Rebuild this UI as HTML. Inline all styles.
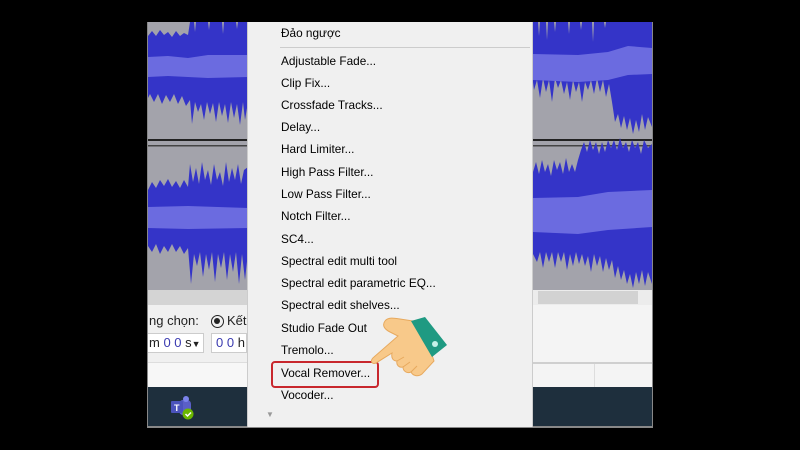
<!DOCTYPE html>
<html><head><meta charset="utf-8"><style>
*{margin:0;padding:0;box-sizing:border-box}
body{width:800px;height:450px;background:#000;position:relative;overflow:hidden;font-family:"Segoe UI","Liberation Sans","Noto Sans CJK SC",sans-serif}
.abs{position:absolute}
.menu{left:247px;top:22px;width:286px;height:405px;background:#f0f0f0;border-left:1px solid #ccc;border-right:1px solid #ccc}
.it{position:absolute;left:33px;font-size:11.8px;color:#000;white-space:nowrap}
</style></head><body>
<div class="abs" style="left:147px;top:22px;width:506px;height:406px;background:#888"></div>
<svg class="abs" style="left:148px;top:22px" width="504" height="268" viewBox="0 0 504 268">
<rect width="504" height="268" fill="#a3a3ab"/>
<!-- track 1 -->
<path d="M0 14 L4 9 L8 14 L12 8 L16 13 L20 10 L24 15 L28 9 L32 14 L36 11 L40 13 L42 0 L100 0 L100 80 L97 98 L95 80 L92 103 L89 82 L86 96 L83 80 L80 101 L77 82 L74 94 L71 80 L68 100 L65 81 L62 92 L59 80 L56 98 L53 82 L50 90 L47 80 L44 102 L42 78 L38 84 L34 74 L30 82 L26 72 L22 80 L18 73 L14 82 L10 72 L6 80 L2 72 L0 76 Z" fill="#3434c8"/>
<path d="M46 0 L47 10 L48 0 M60 0 L61 8 L62 0 M74 0 L75 12 L76 0 M88 0 L89 7 L90 0" fill="#a3a3ab"/>
<path d="M0 35 L20 34 L40 36 L60 33 L100 33 L100 55 L60 56 L40 55 L20 54 L0 55 Z" fill="#6b6be0"/>
<path d="M385 0 L504 0 L504 105 L500 95 L497 108 L494 92 L491 110 L488 98 L485 112 L482 96 L479 108 L476 94 L473 106 L470 92 L467 100 L464 80 L461 62 L458 75 L455 58 L452 70 L449 56 L446 72 L443 58 L440 68 L437 60 L434 80 L431 60 L428 70 L425 58 L422 78 L419 60 L416 72 L413 58 L410 66 L407 56 L404 80 L401 58 L398 70 L395 56 L392 76 L389 58 L386 68 L385 60 Z" fill="#3434c8"/>
<path d="M390 0 L391 14 L392 0 M398 0 L399 18 L400 0 M406 0 L407 10 L408 0 M420 0 L421 12 L422 0 M432 0 L433 8 L434 0 M444 0 L445 20 L446 0 M456 0 L457 6 L458 0" fill="#a3a3ab"/>
<path d="M385 32 L430 33 L460 30 L480 24 L504 26 L504 52 L480 53 L460 58 L430 60 L385 58 Z" fill="#6b6be0"/>
<rect x="0" y="117" width="504" height="2" fill="#222"/>
<rect x="0" y="123" width="504" height="1.5" fill="#444"/>
<!-- track 2 -->
<path d="M0 168 L4 160 L8 166 L12 158 L16 164 L20 157 L24 165 L28 159 L32 166 L36 158 L40 165 L42 142 L45 160 L48 146 L51 162 L54 140 L57 158 L60 148 L63 163 L66 142 L69 158 L72 150 L75 164 L78 140 L81 160 L84 146 L87 158 L90 142 L93 162 L96 148 L100 145 L100 230 L97 258 L94 232 L91 262 L88 230 L85 250 L82 232 L79 258 L76 230 L73 246 L70 232 L67 260 L64 230 L61 248 L58 232 L55 255 L52 230 L49 244 L46 232 L43 262 L40 226 L36 232 L32 224 L28 230 L24 222 L20 230 L16 224 L12 232 L8 222 L4 230 L0 224 Z" fill="#3434c8"/>
<path d="M385 150 L388 140 L391 152 L394 138 L397 150 L400 142 L403 154 L406 138 L409 148 L412 140 L415 152 L418 136 L421 150 L424 142 L427 150 L430 138 L433 128 L436 120 L439 130 L442 118 L445 128 L448 120 L451 132 L454 120 L457 130 L460 118 L463 126 L466 118 L469 128 L472 116 L475 126 L478 120 L481 130 L484 118 L487 126 L490 120 L493 132 L496 118 L500 126 L504 122 L504 262 L500 250 L497 264 L494 248 L491 262 L488 250 L485 266 L482 252 L479 262 L476 248 L473 258 L470 244 L467 256 L464 238 L461 248 L458 236 L455 250 L452 234 L449 244 L446 232 L443 250 L440 234 L437 244 L434 232 L431 242 L428 230 L425 244 L422 232 L419 248 L416 230 L413 240 L410 230 L407 246 L404 230 L401 240 L398 230 L395 246 L392 230 L389 240 L385 232 Z" fill="#3434c8"/>
<path d="M0 185 L40 184 L100 186 L100 206 L40 207 L0 206 Z" fill="#6b6be0"/>
<path d="M385 176 L430 175 L460 170 L504 168 L504 205 L460 208 L430 212 L385 210 Z" fill="#6b6be0"/>
</svg>
<!-- bottom left panel -->
<div class="abs" style="left:148px;top:290px;width:99px;height:15px;background:#d4d4d4"></div>
<div class="abs" style="left:148px;top:305px;width:99px;height:57px;background:#f0f0f0"></div>
<div class="abs" style="left:148px;top:362px;width:99px;height:25px;background:#f7f7f7;border-top:1px solid #ddd"></div>
<div class="abs" style="left:148px;top:387px;width:504px;height:39px;background:#1e2f3d"></div>
<div class="abs" style="left:149px;top:313px;font-size:13px;color:#222">ng chọn:</div>
<div class="abs" style="left:211px;top:315px;width:13px;height:13px;border:1.5px solid #222;border-radius:50%"><div style="margin:2px;width:6px;height:6px;border-radius:50%;background:#222"></div></div>
<div class="abs" style="left:227px;top:313px;font-size:13px;color:#222">Kết</div>
<div class="abs" style="left:148px;top:333px;width:56px;height:20px;background:#fff;border:1px solid #ccc;border-left:none;font-size:13px;color:#222;padding-left:1px;line-height:18px">m <span style="color:#3a3ab0">0 0</span> s<span style="font-size:9px">▼</span></div>
<div class="abs" style="left:211px;top:333px;width:36px;height:20px;background:#fff;border:1px solid #ccc;font-size:13px;color:#222;padding-left:4px;line-height:18px"><span style="color:#3a3ab0">0 0</span> h</div>
<svg class="abs" style="left:168px;top:396px" width="30" height="26"><rect x="11" y="4" width="12" height="15" rx="4" fill="#5b5fc7"/><circle cx="18" cy="3" r="3" fill="#7b83eb"/><rect x="3" y="5" width="12" height="12" rx="1" fill="#4b53bc"/><text x="6" y="15" font-size="9" fill="#fff" font-family="Liberation Sans" font-weight="bold">T</text><circle cx="20" cy="18" r="5.5" fill="#6bb700"/><path d="M17.5 18 l2 2 l3.5-3.5" stroke="#fff" stroke-width="1.5" fill="none"/></svg>
<!-- right bottom -->
<div class="abs" style="left:533px;top:290px;width:119px;height:15px;background:#ececec"></div>
<div class="abs" style="left:538px;top:291px;width:100px;height:13px;background:#d2d2d2"></div>
<div class="abs" style="left:533px;top:305px;width:119px;height:82px;background:#f4f4f4"></div>
<div class="abs" style="left:533px;top:362px;width:119px;height:2px;background:#cfcfcf"></div>
<div class="abs" style="left:594px;top:364px;width:1px;height:23px;background:#ddd"></div>
<!-- menu -->
<div class="abs menu">
<div class="it" style="top:4px">Đảo ngược</div>
<div class="abs" style="left:32px;top:25px;width:250px;height:1px;background:#ccc"></div>
<div class="it" style="top:32px">Adjustable Fade...</div>
<div class="it" style="top:54px">Clip Fix...</div>
<div class="it" style="top:76px">Crossfade Tracks...</div>
<div class="it" style="top:98px">Delay...</div>
<div class="it" style="top:120px">Hard Limiter...</div>
<div class="it" style="top:143px">High Pass Filter...</div>
<div class="it" style="top:165px">Low Pass Filter...</div>
<div class="it" style="top:187px">Notch Filter...</div>
<div class="it" style="top:210px">SC4...</div>
<div class="it" style="top:232px">Spectral edit multi tool</div>
<div class="it" style="top:254px">Spectral edit parametric EQ...</div>
<div class="it" style="top:276px">Spectral edit shelves...</div>
<div class="it" style="top:299px">Studio Fade Out</div>
<div class="it" style="top:321px">Tremolo...</div>
<div class="it" style="top:344px">Vocal Remover...</div>
<div class="it" style="top:366px">Vocoder...</div>
<div class="abs" style="left:23px;top:339px;width:108px;height:27px;border:2px solid #c8272d;border-radius:4px"></div>
<div class="abs" style="left:18px;top:388px;font-size:8px;color:#999">▼</div>
</div>
<!-- hand -->
<svg class="abs" style="left:360px;top:305px" width="100" height="90" viewBox="0 0 100 90">
<path d="M53 16 L40 14 C34 13 28 12 25 16 C22 20 24 24 30 27 L38 31 L14 52 C10 55 11 60 16 58 L32 48 C31 53 33 56 37 56 C36 60 39 63 43 62 C43 66 47 69 51 67 C53 71 58 72 62 69 L74 56 L72 50 L62 34 Z" fill="#f8c98a" stroke="#e7a95e" stroke-width="1"/>
<path d="M37 56 L44 52 M43 62 L50 57 M51 67 L57 61" stroke="#e7a95e" stroke-width="1" fill="none"/>
<path d="M51 16 L65 12 L87 40 L72 52 Z" fill="#1f9a82"/>
<circle cx="75" cy="39" r="3" fill="#c4f2e8"/>
</svg>
</body></html>
